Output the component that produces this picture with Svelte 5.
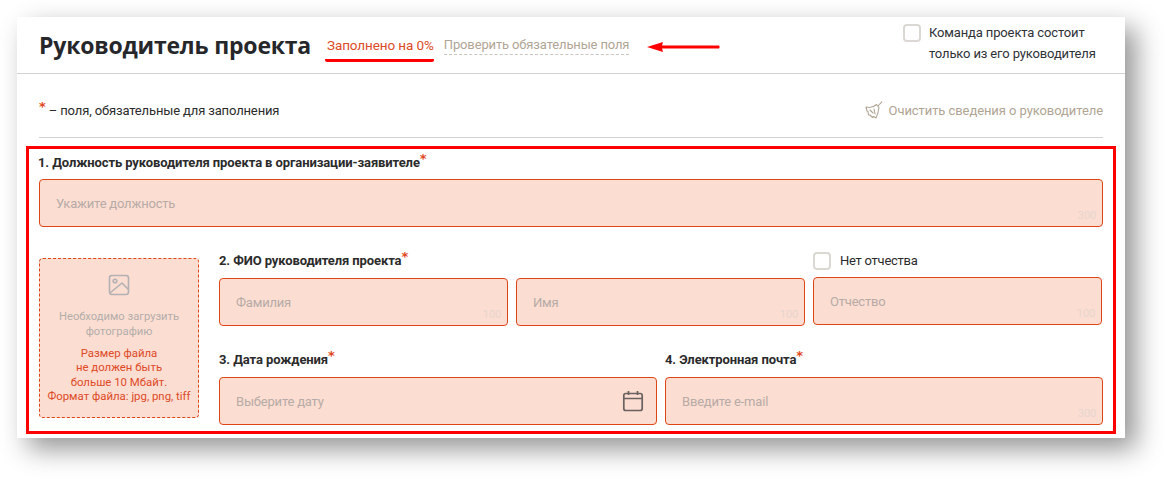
<script>
  const nameFields = [
    { placeholder: 'Фамилия', max: 100 },
    { placeholder: 'Имя', max: 100 },
    { placeholder: 'Отчество', max: 100, lifted: true }
  ];
</script>

<div class="page">
  <main class="card">
    <header class="head">
      <h1>Руководитель проекта</h1>
      <span class="filled">Заполнено на 0%</span>
      <span class="check">Проверить обязательные поля</span>
      <label class="solo">
        <span class="box"></span>
        <span class="solo-text">Команда проекта состоит<br />только из его руководителя</span>
      </label>
      <svg class="arrow" width="74" height="12" viewBox="0 0 74 12" aria-hidden="true">
        <path d="M0 6 L16 1 L15 4.6 L72 4.6 Q73.5 6 72 7.4 L15 7.4 L16 11 Z" fill="#ff0000" />
      </svg>
    </header>

    <div class="sub">
      <p class="note"><span class="star">*</span> – поля, обязательные для заполнения</p>
      <button class="clear" type="button">
        <svg width="18" height="18" viewBox="0 0 18 18" fill="none" stroke="#b0a594" stroke-width="1.1" stroke-linejoin="round" stroke-linecap="round" aria-hidden="true">
          <path d="M1 6 C5 7 9 6 11.5 3.5 L14 6.5 C13.5 10 12.5 14 11 17 L8.5 15.5 L7.5 16.5 L5 14 L3.5 14 L3 10.5 L2 10 Z" />
          <path d="M13 5 L16.8 0.8" />
          <path d="M5 9 L8 12 M9 8 L10 13" />
        </svg>
        Очистить сведения о руководителе
      </button>
    </div>

    <section class="form">
      <div class="lab">1. Должность руководителя проекта в организации-заявителе<span class="req">*</span></div>
      <div class="input wide"><span class="ph">Укажите должность</span><span class="count">300</span></div>

      <div class="lower">
        <div class="photo">
          <svg class="pic" width="22" height="22" viewBox="0 0 22 22" fill="none" stroke="#b3b1b3" stroke-width="1.6" stroke-linejoin="round" aria-hidden="true">
            <rect x="1.5" y="1.5" width="19" height="19" rx="2.5" />
            <circle cx="7" cy="7" r="1.8" />
            <path d="M2.5 18.5 L14 9 L20.5 15.5" />
          </svg>
          <p class="need">Необходимо загрузить<br />фотографию</p>
          <p class="rules">Размер файла<br />не должен быть<br />больше 10 Мбайт.<br />Формат файла: jpg, png, tiff</p>
        </div>

        <div class="fields">
          <div class="row three">
            {#each nameFields as field, i}
              <div class="field" class:lifted={field.lifted}>
                {#if i === 0}
                  <div class="lab">2. ФИО руководителя проекта<span class="req">*</span></div>
                {:else if i === 2}
                  <label class="nomid"><span class="box"></span>Нет отчества</label>
                {:else}
                  <div class="lab">&nbsp;</div>
                {/if}
                <div class="input"><span class="ph">{field.placeholder}</span><span class="count">{field.max}</span></div>
              </div>
            {/each}
          </div>
          <div class="row two">
            <div class="field">
              <div class="lab">3. Дата рождения<span class="req">*</span></div>
              <div class="input">
                <span class="ph">Выберите дату</span>
                <svg class="cal" width="22" height="22" viewBox="0 0 22 22" fill="none" stroke="#6a625f" stroke-width="1.7" stroke-linejoin="round" aria-hidden="true">
                  <rect x="1.8" y="3.5" width="18.4" height="17" rx="2" />
                  <path d="M1.8 8.5 H20.2 M6.5 1 V5 M15.5 1 V5" />
                </svg>
              </div>
            </div>
            <div class="field">
              <div class="lab">4. Электронная почта<span class="req">*</span></div>
              <div class="input"><span class="ph">Введите e-mail</span><span class="count">300</span></div>
            </div>
          </div>
        </div>
      </div>
    </section>
  </main>
</div>

<style>
  :global(body) {
    margin: 0;
    background: #fff;
  }
  .page {
    width: 1173px;
    height: 486px;
    padding: 17px 0 0 17px;
    box-sizing: border-box;
    overflow: hidden;
    font-family: Roboto, "Noto Sans", sans-serif;
    font-size: 13px;
    letter-spacing: -0.14px;
    color: #2b2b2b;
  }
  .card {
    width: 1108px;
    height: 421px;
    background: #fff;
    box-shadow: 11px 11px 25px rgba(0, 0, 0, 0.42);
  }
  .head {
    position: relative;
    box-sizing: border-box;
    border-bottom: 1px solid #d4d2cf;
    height: 57px;
    padding: 0 22px;
    display: flex;
    align-items: center;
  }
  h1 {
    margin: 0;
    width: 272px;
    white-space: nowrap;
    font-family: "Open Sans", sans-serif;
    font-size: 23px;
    font-weight: 700;
    letter-spacing: -0.2px;
    color: #26272b;
  }
  .filled {
    margin-left: 14px;
    padding-left: 2px;
    font-size: 13.5px;
    letter-spacing: -0.1px;
    color: #dc4a26;
    padding-bottom: 5px;
    border-bottom: 3px solid #f00;
    border-radius: 2px;
    margin-top: 7px;
    line-height: 18px;
  }
  .check {
    margin-left: 10px;
    color: #b0a594;
    border-bottom: 1px dashed #c9c6c2;
    line-height: 18px;
    margin-top: 1px;
  }
  .solo {
    position: absolute;
    top: 5px;
    left: 886px;
    display: flex;
    gap: 8px;
    line-height: 21px;
    color: #2f3136;
  }
  .solo .box {
    margin-top: 2px;
  }
  .box {
    display: block;
    flex: none;
    width: 14px;
    height: 14px;
    border: 2px solid #dbd8d4;
    border-radius: 4px;
  }
  .arrow {
    position: absolute;
    left: 630px;
    top: 24px;
  }
  .sub {
    margin: 0 22px;
    height: 64px;
    box-sizing: border-box;
    border-bottom: 1px solid #d4d2cf;
    display: flex;
    justify-content: space-between;
    align-items: center;
    padding-top: 9px;
  }
  .note {
    margin: 0;
  }
  .star,
  .req {
    font-family: "DejaVu Sans", sans-serif;
    color: #df4720;
    font-weight: 700;
    font-size: 13px;
    line-height: 0;
    position: relative;
    top: -4px;
  }
  .clear {
    display: flex;
    align-items: center;
    gap: 6px;
    border: 0;
    background: none;
    padding: 0;
    font: inherit;
    letter-spacing: -0.08px;
    color: #b0a594;
  }
  .form {
    margin: 8px 9px 0;
    height: 288px;
    box-sizing: border-box;
    border: 3px solid #f00;
    padding: 4px 10px 6px;
  }
  .lab {
    height: 20px;
    line-height: 20px;
    font-size: 13px;
    font-weight: 700;
    letter-spacing: -0.1px;
    margin-left: -1px;
    color: #2b2b2b;
    white-space: nowrap;
  }
  .fields .lab {
    line-height: 18px;
  }
  .input {
    position: relative;
    height: 48px;
    box-sizing: border-box;
    margin-top: 6px;
    padding-left: 16px;
    display: flex;
    align-items: center;
    background: #fcddd2;
    border: 1px solid #dd4514;
    border-radius: 4px;
  }
  .ph {
    color: #b6aba6;
    letter-spacing: -0.2px;
  }
  .count {
    position: absolute;
    right: 6px;
    bottom: 4px;
    font-size: 11px;
    line-height: 12px;
    color: #e6d6ce;
  }
  .cal {
    position: absolute;
    right: 12px;
    top: 12px;
  }
  .lower {
    display: grid;
    grid-template-columns: 160px 884px;
    gap: 20px;
    margin-top: 31px;
  }
  .photo {
    height: 160px;
    box-sizing: border-box;
    background: #fcddd2;
    border: 1px dashed #dd4514;
    border-radius: 4px;
    text-align: center;
    font-size: 11.2px;
    letter-spacing: 0;
    padding-top: 15px;
  }
  .pic {
    display: block;
    margin: 0 auto;
  }
  .need {
    margin: 13px 0 0;
    line-height: 15px;
    color: #b3adaa;
  }
  .rules {
    margin: 7px 0 0;
    font-size: 11.4px;
    line-height: 14.4px;
    color: #dc4a26;
  }
  .fields {
    margin-top: -6px;
  }
  .row {
    display: grid;
    gap: 8px;
  }
  .three {
    grid-template-columns: repeat(3, 289px);
  }
  .two {
    grid-template-columns: repeat(2, 438px);
    margin-top: 25px;
  }
  .field .lab {
    margin-left: 0;
  }
  .lifted .input {
    margin-top: 7px;
  }
  .nomid {
    display: flex;
    align-items: center;
    gap: 9px;
    height: 19px;
    margin-top: -1px;
    letter-spacing: -0.25px;
  }
</style>
